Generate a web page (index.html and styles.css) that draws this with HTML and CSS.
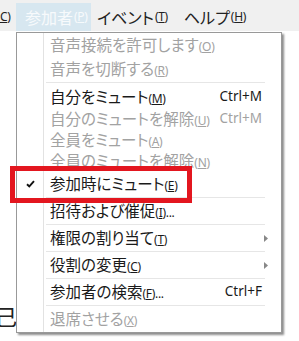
FILE: index.html
```html
<!DOCTYPE html>
<html lang="ja">
<head>
  <meta charset="UTF-8">
  <title>参加者メニュー</title>
  <link rel="stylesheet" href="styles.css">
</head>
<body>
  <div class="menubar">
    <span class="mb-item cut"><span class="key"><u>C</u>)</span></span>
    <span class="mb-item open">参加者<span class="key">(<u>P</u>)</span></span>
    <span class="mb-item">イベント<span class="key">(<u>T</u>)</span></span>
    <span class="mb-item">ヘルプ<span class="key">(<u>H</u>)</span></span>
  </div>

  <div class="page">
    <div class="bg-text">自己の</div>
  </div>

  <div class="menu">
    <div class="item first disabled"><span class="check"></span><span class="label">音声接続を許可します<span class="key">(<u>O</u>)</span></span></div>
    <div class="item second disabled"><span class="check"></span><span class="label">音声を切断する<span class="key">(<u>R</u>)</span></span></div>
    <div class="sep"></div>
    <div class="item mid"><span class="check"></span><span class="label">自分をミュート<span class="key">(<u>M</u>)</span></span><span class="shortcut">Ctrl+M</span></div>
    <div class="item disabled"><span class="check"></span><span class="label">自分のミュートを解除<span class="key">(<u>U</u>)</span></span><span class="shortcut">Ctrl+M</span></div>
    <div class="item disabled"><span class="check"></span><span class="label">全員をミュート<span class="key">(<u>A</u>)</span></span></div>
    <div class="item disabled"><span class="check"></span><span class="label">全員のミュートを解除<span class="key">(<u>N</u>)</span></span></div>
    <div class="item tall">
      <span class="check">
        <svg width="9" height="8" viewBox="0 0 9 8"><path d="M1 4.2 L3.3 6.4 L8 1.2" fill="none" stroke="#111" stroke-width="1.9"/></svg>
      </span>
      <span class="label">参加時にミュート<span class="key">(<u>E</u>)</span></span>
    </div>
    <div class="line"></div>
    <div class="item tall"><span class="check"></span><span class="label">招待および催促<span class="key">(<u>I</u>)...</span></span></div>
    <div class="line"></div>
    <div class="item tall"><span class="check"></span><span class="label">権限の割り当て<span class="key">(<u>T</u>)</span></span><span class="arrow"><svg width="4" height="7" viewBox="0 0 4 7"><path d="M0 0 L4 3.5 L0 7 Z" fill="#888"/></svg></span></div>
    <div class="line"></div>
    <div class="item tall"><span class="check"></span><span class="label">役割の変更<span class="key">(<u>C</u>)</span></span><span class="arrow"><svg width="4" height="7" viewBox="0 0 4 7"><path d="M0 0 L4 3.5 L0 7 Z" fill="#888"/></svg></span></div>
    <div class="line"></div>
    <div class="item tall"><span class="check"></span><span class="label">参加者の検索<span class="key">(<u>F</u>)...</span></span><span class="shortcut">Ctrl+F</span></div>
    <div class="line"></div>
    <div class="item tall disabled"><span class="check"></span><span class="label">退席させる<span class="key">(<u>X</u>)</span></span></div>
  </div>

  <div class="highlight-box"></div>
</body>
</html>
```

FILE: styles.css
```css
body {
  margin: 0;
  padding: 0;
  background-color: #fff;
  font-family: "Noto Sans CJK JP", "Noto Sans", sans-serif;
  font-feature-settings: "palt";
  color: #1a1a1a;
  overflow: hidden;
}
.menubar {
  display: flex;
  height: 31px;
  background-color: #f0f0f0;
  font-size: 16px;
  line-height: 1;
  white-space: nowrap;
}
.mb-item {
  display: flex;
  align-items: center;
  flex: none;
  padding: 0 10px 0 6px;
  margin-top: 3px;
  color: #222;
}
.mb-item.cut {
  padding: 0;
  margin-left: -1px;
  width: 17px;
}
.mb-item.open {
  padding: 0 6px 0 9px;
  background-color: #d7e7f0;
  color: #f7fafc;
  width: 60px;
}
.mb-item .key {
  margin-left: 1px;
}
.key {
  font-family: "Noto Sans", sans-serif;
  font-size: 12px;
  letter-spacing: -0.3px;
}
.page {
  height: 310px;
}
.bg-text {
  padding-top: 272px;
  margin-left: -27px;
  font-size: 22px;
  line-height: 1.1;
  color: #222;
}
.menu {
  position: absolute;
  left: 16px;
  top: 32px;
  width: 266px;
  box-sizing: border-box;
  border: 1px solid #999;
  background: linear-gradient(to right, #fff 26px, #e2e2e2 26px, #e2e2e2 27px, #fff 27px);
  box-shadow: 2px 2px 2px rgba(0, 0, 0, 0.45);
  font-size: 15.5px;
  line-height: 1;
}
.item {
  display: flex;
  align-items: center;
  height: 21px;
  padding-right: 19px;
}
.item.first {
  height: 24px;
}
.item.second,
.item.mid {
  height: 23px;
}
.item.tall {
  height: 26px;
}
.item.disabled {
  color: #a2a2a2;
}
.check {
  display: flex;
  justify-content: center;
  align-items: center;
  width: 27px;
  flex: none;
}
.label {
  flex: 1;
  padding-left: 6px;
  white-space: nowrap;
}
.shortcut {
  font-family: "Noto Sans", sans-serif;
  font-size: 13.5px;
}
.arrow {
  display: flex;
  margin-right: -6px;
}
.sep {
  height: 5px;
  margin: 0 16px 0 29px;
  background: linear-gradient(#fff 2px, #e6e6e6 2px, #e6e6e6 3px, #fff 3px);
}
.line {
  height: 1px;
  margin: 0 16px 0 29px;
  background-color: #e6e6e6;
}
.highlight-box {
  position: absolute;
  left: 10px;
  top: 166px;
  width: 182px;
  height: 37px;
  box-sizing: border-box;
  border: 5px solid #e3161f;
}
```
